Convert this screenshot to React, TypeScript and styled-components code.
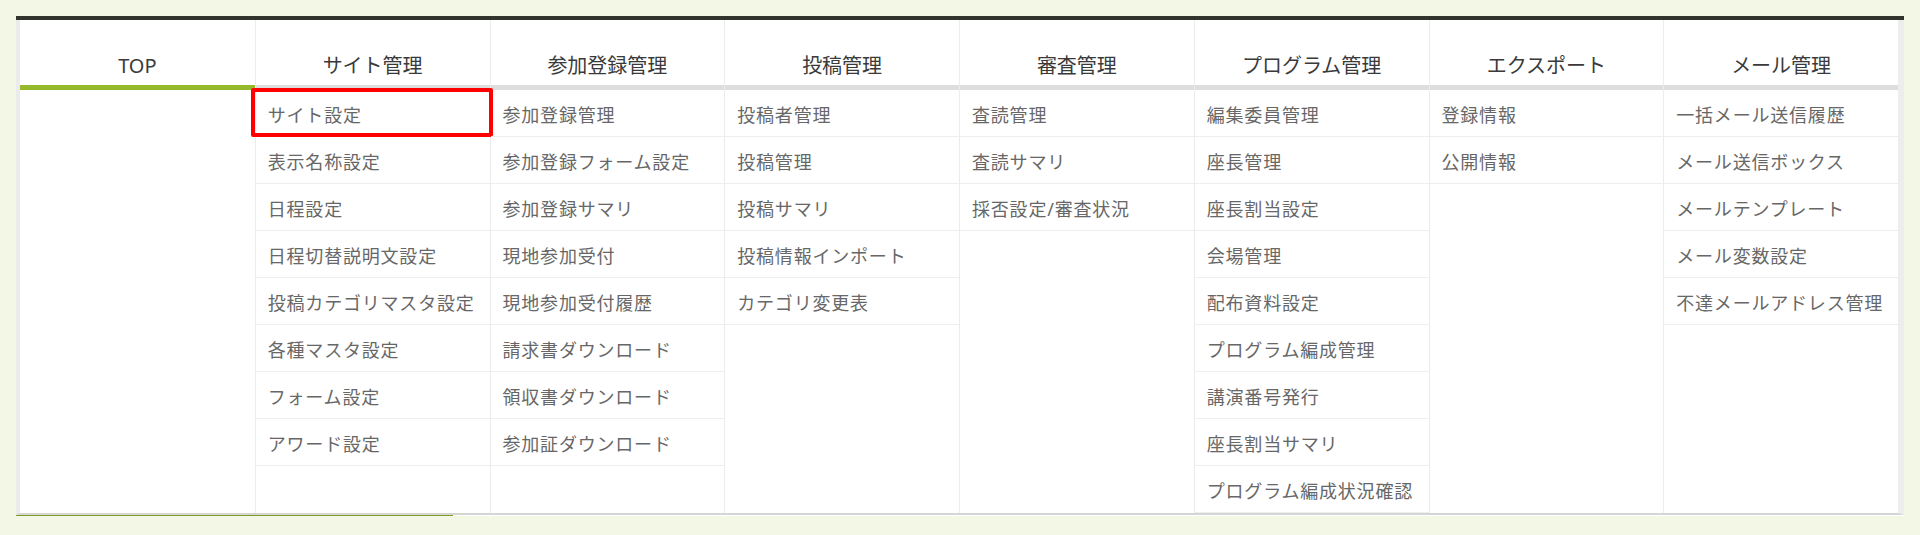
import React from "react";
import styled, { createGlobalStyle } from "styled-components";

const GlobalStyle = createGlobalStyle`
  html, body {
    margin: 0;
    padding: 0;
    background: #f3f7e6;
  }
  body {
    font-family: "Noto Sans", "Noto Sans CJK JP", sans-serif;
  }
`;

const Page = styled.div`
  padding: 16px;
`;

const Frame = styled.div`
  position: relative;
  width: 1888px;
  height: 500px;
  display: flex;
  flex-direction: column;
`;

const TopBar = styled.div`
  height: 4px;
  background: #30342d;
  flex: none;
`;

const BackdropBody = styled.div`
  flex: 1;
  background: #ffffff;
  display: flex;
  flex-direction: column;
`;

const BackdropBand = styled.div`
  margin-top: 128px;
  height: 55px;
  background: #7e9d25;
`;

const BackdropFooter = styled.div`
  margin-top: auto;
  width: 434px;
  height: 24px;
  border-left: 3px solid #7e9d25;
  border-bottom: 3px solid #7e9d25;
`;

const MenuPanel = styled.nav`
  position: absolute;
  top: 4px;
  left: 0;
  right: 0;
  background: #ffffff;
  border-left: 4px solid rgba(0, 0, 0, 0.08);
  border-right: 6px solid rgba(0, 0, 0, 0.07);
  border-bottom: 2px solid rgba(0, 0, 0, 0.16);
  display: grid;
  grid-template-columns: repeat(8, 1fr);
`;

const Column = styled.div<{ $first?: boolean }>`
  display: flex;
  flex-direction: column;
  border-left: ${(p) => (p.$first ? "none" : "1px solid #ececec")};
  min-width: 0;
`;

const ColumnHeader = styled.div<{ $active?: boolean }>`
  height: 70px;
  box-sizing: border-box;
  display: flex;
  align-items: flex-end;
  justify-content: center;
  padding-bottom: 7px;
  font-size: 20px;
  line-height: 24px;
  color: #3a3a3a;
  border-bottom: 5px solid ${(p) => (p.$active ? "#96b92c" : "#dddddd")};
`;

const ItemList = styled.ul`
  list-style: none;
  margin: 0;
  padding: 0;
`;

const Item = styled.li<{ $highlight?: boolean }>`
  position: relative;
  box-sizing: border-box;
  height: 47px;
  border-bottom: 1px solid #eeeeee;
  display: flex;
  align-items: center;
  padding: 2px 0 0 12px;
  font-size: 18px;
  letter-spacing: 0.8px;
  color: #676767;
  white-space: nowrap;

  ${(p) =>
    p.$highlight &&
    `
    &::after {
      content: "";
      position: absolute;
      top: -2px;
      left: -5px;
      right: -3px;
      bottom: -1px;
      border: 4px solid #ff0000;
      border-radius: 2px;
      pointer-events: none;
    }
  `}
`;

type MenuColumn = {
  title: string;
  items: string[];
  active?: boolean;
};

const columns: MenuColumn[] = [
  { title: "TOP", items: [], active: true },
  {
    title: "サイト管理",
    items: [
      "サイト設定",
      "表示名称設定",
      "日程設定",
      "日程切替説明文設定",
      "投稿カテゴリマスタ設定",
      "各種マスタ設定",
      "フォーム設定",
      "アワード設定",
    ],
  },
  {
    title: "参加登録管理",
    items: [
      "参加登録管理",
      "参加登録フォーム設定",
      "参加登録サマリ",
      "現地参加受付",
      "現地参加受付履歴",
      "請求書ダウンロード",
      "領収書ダウンロード",
      "参加証ダウンロード",
    ],
  },
  {
    title: "投稿管理",
    items: ["投稿者管理", "投稿管理", "投稿サマリ", "投稿情報インポート", "カテゴリ変更表"],
  },
  {
    title: "審査管理",
    items: ["査読管理", "査読サマリ", "採否設定/審査状況"],
  },
  {
    title: "プログラム管理",
    items: [
      "編集委員管理",
      "座長管理",
      "座長割当設定",
      "会場管理",
      "配布資料設定",
      "プログラム編成管理",
      "講演番号発行",
      "座長割当サマリ",
      "プログラム編成状況確認",
    ],
  },
  {
    title: "エクスポート",
    items: ["登録情報", "公開情報"],
  },
  {
    title: "メール管理",
    items: [
      "一括メール送信履歴",
      "メール送信ボックス",
      "メールテンプレート",
      "メール変数設定",
      "不達メールアドレス管理",
    ],
  },
];

export default function App() {
  return (
    <>
      <GlobalStyle />
      <Page>
        <Frame>
          <TopBar />
          <BackdropBody>
            <BackdropBand />
            <BackdropFooter />
          </BackdropBody>
          <MenuPanel>
            {columns.map((col, ci) => (
              <Column key={col.title} $first={ci === 0}>
                <ColumnHeader $active={col.active}>{col.title}</ColumnHeader>
                <ItemList>
                  {col.items.map((it, ii) => (
                    <Item key={it} $highlight={ci === 1 && ii === 0}>
                      {it}
                    </Item>
                  ))}
                </ItemList>
              </Column>
            ))}
          </MenuPanel>
        </Frame>
      </Page>
    </>
  );
}
